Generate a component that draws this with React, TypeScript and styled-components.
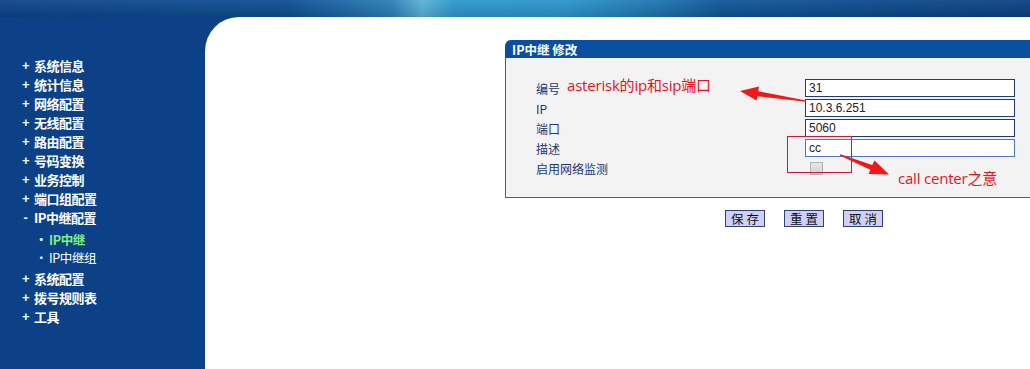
import React from "react";
import styled, { createGlobalStyle } from "styled-components";

const GlobalStyle = createGlobalStyle`
  html, body {
    margin: 0;
    padding: 0;
    background: #0c4188;
  }
  body {
    font-family: "Liberation Sans", Arial, "Noto Sans CJK SC", sans-serif;
    font-size: 12px;
  }
`;

const Page = styled.div`
  position: relative;
  width: 1030px;
  height: 369px;
  display: flex;
  flex-direction: column;
  overflow: hidden;
  background: #0c4188;
`;

const Banner = styled.div`
  height: 17px;
  flex-shrink: 0;
  background:
    linear-gradient(180deg, rgba(255, 255, 255, 0.06) 0%, rgba(0, 0, 0, 0.12) 100%),
    linear-gradient(
      90deg,
      #0c4489 0%,
      #0d4f93 28%,
      #2a7fb8 38%,
      #5db2d8 41%,
      #2e98cf 44%,
      #2b95cc 55%,
      #1c74b0 64%,
      #0f5698 70%,
      #0b4a8c 85%,
      #0a4184 100%
    );
`;

const Body = styled.div`
  flex: 1;
  display: flex;
`;

const Sidebar = styled.nav`
  width: 205px;
  flex-shrink: 0;
  padding: 39px 0 0 17px;
  box-sizing: border-box;
  font-family: "Noto Sans CJK SC", sans-serif;
`;

const MenuItem = styled.div`
  display: flex;
  align-items: center;
  height: 19px;
  color: #ffffff;
  font-size: 13px;
  font-weight: 700;
  letter-spacing: -0.5px;
`;

const Marker = styled.span`
  width: 17px;
  text-align: center;
  color: #e6ffe6;
  font-family: "Liberation Sans", sans-serif;
  font-size: 13px;
  font-weight: 700;
`;

const SubList = styled.div`
  padding: 3px 0 3px 16px;
`;

const SubItem = styled.div<{ $active?: boolean }>`
  display: flex;
  align-items: center;
  height: 18px;
  font-size: 12.5px;
  font-weight: ${(p) => (p.$active ? 700 : 400)};
  color: ${(p) => (p.$active ? "#7cf07c" : "#ffffff")};
  letter-spacing: -0.4px;
`;

const Dot = styled.span`
  width: 16px;
  text-align: center;
  color: #e6ffe6;
  font-size: 12px;
`;

const Main = styled.main`
  flex: 1;
  background: #ffffff;
  border-top-left-radius: 34px;
  padding: 23px 0 0 300px;
  overflow: hidden;
`;

const Panel = styled.section`
  width: 560px;
`;

const PanelHeader = styled.div`
  height: 18px;
  display: flex;
  align-items: center;
  padding-left: 7px;
  background: #0b50a0;
  border-top-left-radius: 6px;
  color: #ffffff;
  font-family: "Noto Sans CJK SC", sans-serif;
  font-size: 12.5px;
  font-weight: 700;
`;

const PanelBody = styled.div`
  background: #f3f3f3;
  border: 1px solid #40618f;
  border-top: none;
  padding: 20px 0 19px 30px;
`;

const FieldRow = styled.div`
  display: grid;
  grid-template-columns: 269px 210px;
  align-items: center;
  height: 20px;
`;

const Label = styled.span`
  color: #1c3677;
  font-family: "Noto Sans CJK SC", sans-serif;
  font-size: 12px;
`;

const TextInput = styled.input<{ $focused?: boolean }>`
  box-sizing: border-box;
  width: 210px;
  height: 18px;
  margin: 0;
  padding: 0 3px;
  border: 1px solid ${(p) => (p.$focused ? "#4a78c2" : "#1e3a78")};
  background: #ffffff;
  color: #222;
  font-family: "Liberation Sans", Arial, sans-serif;
  font-size: 12px;
  outline: none;
`;

const Check = styled.input`
  appearance: none;
  box-sizing: border-box;
  width: 13px;
  height: 13px;
  margin: 1px 0 0 5px;
  border: 1px solid #b4b4b4;
  background: linear-gradient(180deg, #e6e6e6 0%, #d2d2d2 100%);
`;

const Actions = styled.div`
  display: flex;
  gap: 19px;
  padding: 12px 0 0 220px;
`;

const Button = styled.button`
  width: 40px;
  height: 17px;
  padding: 0;
  background: #cfcff7;
  border: 1px solid #2e3f7c;
  color: #111;
  font-family: "Noto Sans CJK SC", sans-serif;
  font-size: 12.5px;
  letter-spacing: 3px;
  text-indent: 3px;
  line-height: 15px;
`;

const Overlay = styled.div`
  position: absolute;
  inset: 0;
  pointer-events: none;
`;

const Note = styled.span<{ $x: number; $y: number }>`
  position: absolute;
  left: ${(p) => p.$x}px;
  top: ${(p) => p.$y}px;
  color: #e8141c;
  font-family: "Open Sans", "Noto Sans CJK SC", sans-serif;
  font-size: 15px;
  line-height: 18px;
  white-space: nowrap;
  letter-spacing: -0.2px;
`;

const Frame = styled.div`
  position: absolute;
  left: 787px;
  top: 136px;
  width: 63px;
  height: 35px;
  border: 1px solid #cc1b3a;
`;

const Arrows = styled.svg`
  position: absolute;
  left: 0;
  top: 0;
`;

const menu = [
  "系统信息",
  "统计信息",
  "网络配置",
  "无线配置",
  "路由配置",
  "号码变换",
  "业务控制",
  "端口组配置",
];

const menuAfter = ["系统配置", "拨号规则表", "工具"];

const fields = [
  { label: "编号", value: "31" },
  { label: "IP", value: "10.3.6.251" },
  { label: "端口", value: "5060" },
  { label: "描述", value: "cc", focused: true },
];

export default function App() {
  return (
    <>
      <GlobalStyle />
      <Page>
        <Banner />
        <Body>
          <Sidebar>
            {menu.map((m) => (
              <MenuItem key={m}>
                <Marker>+</Marker>
                {m}
              </MenuItem>
            ))}
            <MenuItem>
              <Marker>-</Marker>
              IP中继配置
            </MenuItem>
            <SubList>
              <SubItem $active>
                <Dot>•</Dot>IP中继
              </SubItem>
              <SubItem>
                <Dot>•</Dot>IP中继组
              </SubItem>
            </SubList>
            {menuAfter.map((m) => (
              <MenuItem key={m}>
                <Marker>+</Marker>
                {m}
              </MenuItem>
            ))}
          </Sidebar>
          <Main>
            <Panel>
              <PanelHeader>IP中继 修改</PanelHeader>
              <PanelBody>
                {fields.map((f) => (
                  <FieldRow key={f.label}>
                    <Label>{f.label}</Label>
                    <TextInput $focused={f.focused} defaultValue={f.value} />
                  </FieldRow>
                ))}
                <FieldRow>
                  <Label>启用网络监测</Label>
                  <Check type="checkbox" disabled />
                </FieldRow>
              </PanelBody>
            </Panel>
            <Actions>
              <Button>保存</Button>
              <Button>重置</Button>
              <Button>取消</Button>
            </Actions>
          </Main>
        </Body>
        <Overlay>
          <Note $x={567} $y={76}>asterisk的ip和sip端口</Note>
          <Note $x={898} $y={169}>call center之意</Note>
          <Frame />
          <Arrows width="1030" height="369">
            <polygon
              fill="#f01818"
              points="740,91 759,86.5 758.2,91.2 806.1,100.5 805.9,101.8 757.4,96.2 756.5,100.5"
            />
            <polygon
              fill="#f01818"
              points="889,174.5 868.5,174 870.4,169.7 839.8,155.6 840.4,154.3 872.2,165.1 874.5,160.5"
            />
          </Arrows>
        </Overlay>
      </Page>
    </>
  );
}
